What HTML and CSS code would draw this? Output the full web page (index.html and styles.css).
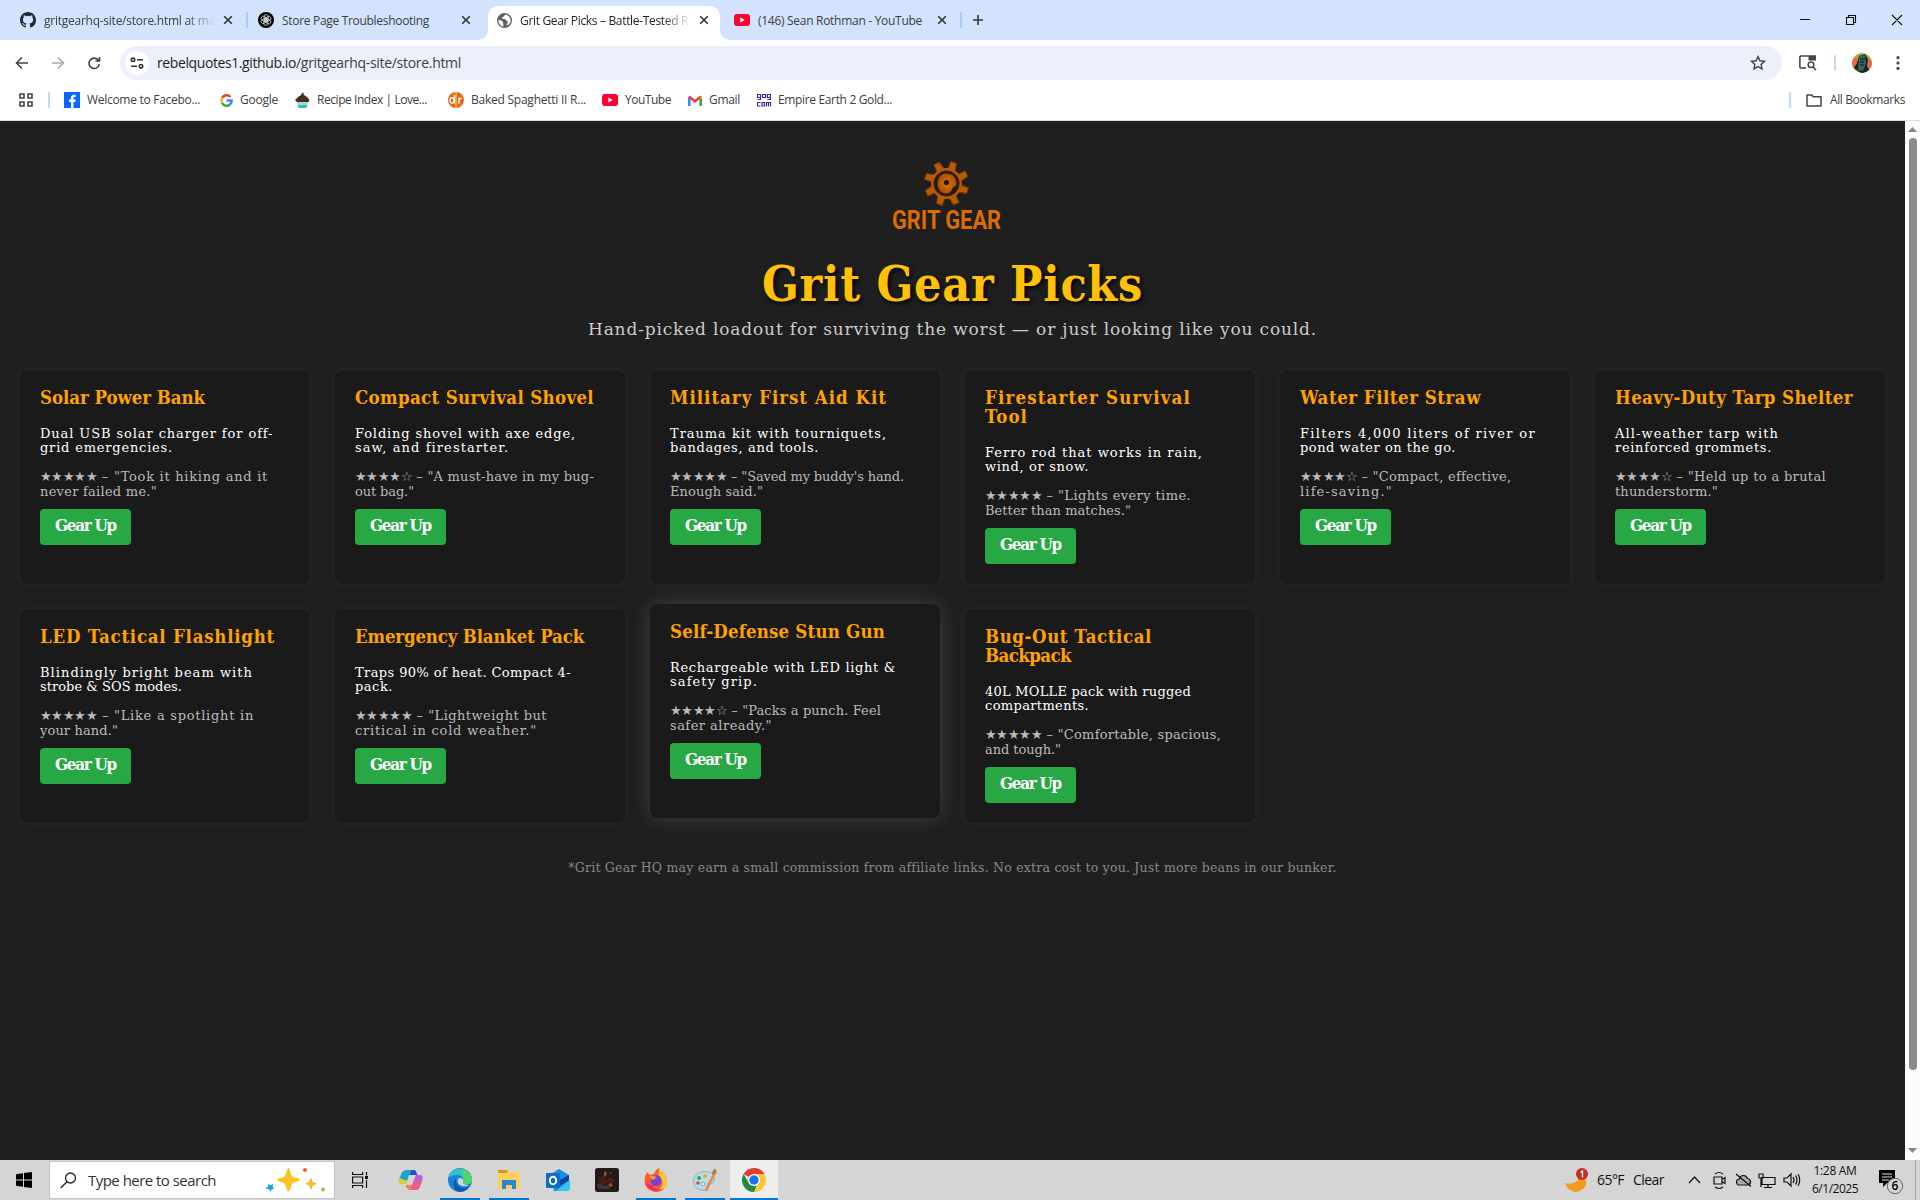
FILE: index.html
```html
<!DOCTYPE html>
<html lang="en">
<head>
<meta charset="utf-8">
<title>Grit Gear Picks</title>
<link rel="stylesheet" href="styles.css">
</head>
<body>
<svg width="0" height="0" class="defs">
  <symbol id="x" viewBox="0 0 10 10"><path d="M1.2 1.2l7.6 7.6M8.800 1.200l-7.600 7.600" stroke="#333" stroke-width="1.6"/></symbol>
  <symbol id="yt" viewBox="0 0 16 12"><rect width="16" height="12" rx="3" fill="#f03"/><path d="M6.300 3.400v5.200l4.500-2.600z" fill="#fff"/></symbol>
</svg>

<header class="tabs">
  <div class="tab t1">
    <svg width="16" height="16" viewBox="0 0 16 16"><path fill="#24292f" d="M8 0C3.580 0 0 3.580 0 8c0 3.540 2.290 6.530 5.470 7.590.4.070.55-.17.55-.38 0-.19-.01-.82-.01-1.490-2.010.37-2.530-.49-2.690-.94-.09-.23-.48-.94-.82-1.130-.28-.15-.68-.52-.01-.53.63-.01 1.080.58 1.230.82.72 1.210 1.870.87 2.330.66.07-.52.28-.87.51-1.070-1.780-.2-3.640-.89-3.640-3.950 0-.87.31-1.590.82-2.150-.08-.2-.36-1.020.08-2.120 0 0 .67-.21 2.200.82a7.600 7.600 0 0 1 4 0c1.530-1.040 2.200-.82 2.200-.82.44 1.100.16 1.920.08 2.120.51.56.82 1.270.82 2.150 0 3.070-1.870 3.750-3.650 3.950.29.25.54.73.54 1.480 0 1.070-.01 1.930-.01 2.200 0 .21.15.46.55.38A8 8 0 0 0 16 8c0-4.420-3.580-8-8-8z"/></svg>
    <span class="fade"><span class="fit" data-w="171">gritgearhq-site/store.html at ma</span></span>
    <svg class="cls" width="10" height="10"><use href="#x"/></svg>
  </div>
  <i class="sep"></i>
  <div class="tab t2">
    <svg width="16" height="16" viewBox="0 0 16 16"><circle cx="8" cy="8" r="8" fill="#000"/><g fill="none" stroke="#ddd" stroke-width=".8"><rect id="petal" x="6.200" y="2.600" width="4" height="6.500" rx="2"/><use href="#petal" transform="rotate(60 8 8)"/><use href="#petal" transform="rotate(120 8 8)"/><use href="#petal" transform="rotate(180 8 8)"/><use href="#petal" transform="rotate(240 8 8)"/><use href="#petal" transform="rotate(300 8 8)"/></g></svg>
    <span class="fit" data-w="147">Store Page Troubleshooting</span>
    <svg class="cls" width="10" height="10"><use href="#x"/></svg>
  </div>
  <div class="tab active">
    <svg width="15" height="15" viewBox="0 0 16 16"><circle cx="8" cy="8" r="8" fill="#5f6368"/><path d="M9 1.500c-1.500 1-1 2.500-2.500 2.600S5 6 6.500 6.300s3-.3 3.200 1.200 2 .8 2 2.200-1.500 2-1.700 3.500c3-.5 4.600-3 4.500-5.500S12 2 9 1.500zM1.600 7c1.500 1.500 4 .5 4.500 2.500s1 2 .5 4.800C3.500 13.800 1.300 10.500 1.600 7z" fill="#fff"/></svg>
    <span class="fade"><span class="fit" data-w="168">Grit Gear Picks – Battle-Tested R</span></span>
    <svg class="cls" width="10" height="10"><use href="#x"/></svg>
  </div>
  <div class="tab t4">
    <svg width="16" height="12"><use href="#yt"/></svg>
    <span class="fit" data-w="164">(146) Sean Rothman - YouTube</span>
    <svg class="cls" width="10" height="10"><use href="#x"/></svg>
  </div>
  <i class="sep"></i>
  <svg class="plus" width="10" height="10" viewBox="0 0 10 10"><path d="M5 0v10M0 5h10" stroke="#333" stroke-width="1.600"/></svg>
  <svg class="winctl" width="103" height="12" viewBox="0 0 103 12" fill="none" stroke="#111" stroke-width="1.100"><path d="M0 5.500h10M46.500 3.500h7v7h-7zM48.500 3.500v-2h7v7h-2M92 1l10 10M102 1l-10 10"/></svg>
</header>

<div class="toolbar">
  <svg class="nav" width="88" height="14" viewBox="0 0 88 14" fill="none" stroke-width="1.600"><path d="M13 7H2M7 1.500L1.500 7 7 12.500" stroke="#444"/><path d="M37 7h11M43 1.500L48.500 7 43 12.500" stroke="#aaa"/><path d="M83.500 4.500A5.200 5.200 0 1 0 84.300 8M84.500 1v4h-4" stroke="#444"/></svg>
  <div class="omni">
    <span class="site"><svg width="14" height="12" viewBox="0 0 14 12" fill="none" stroke="#333" stroke-width="1.600"><circle cx="3" cy="2.800" r="1.700"/><path d="M7 2.800h6M1 9.200h6"/><circle cx="11" cy="9.200" r="1.700"/></svg></span>
    <span class="url"><b class="fit" data-w="139">rebelquotes1.github.io</b><span class="fit" data-w="165">/gritgearhq-site/store.html</span></span>
    <svg class="star" width="16" height="16" viewBox="0 0 16 16"><path d="M8 1.600l1.900 4.200 4.600.5-3.400 3.100.9 4.500L8 11.600l-4 2.300.9-4.500L1.500 6.300l4.600-.5z" fill="none" stroke="#444" stroke-width="1.400"/></svg>
  </div>
  <svg class="lens" width="18" height="16" viewBox="0 0 18 16"><path d="M7 13H1.800q-.9 0-.9-1V2q0-1 .9-1H16v4" fill="none" stroke="#444" stroke-width="1.600"/><path d="M9.500 1H17v4.500H9.500z" fill="#444"/><circle cx="12" cy="9.800" r="2.800" fill="none" stroke="#444" stroke-width="1.500"/><path d="M14 12l3 3" stroke="#444" stroke-width="1.600"/></svg>
  <i class="sep"></i>
  <svg class="avatar" width="20" height="20" viewBox="0 0 20 20"><clipPath id="av"><circle cx="10" cy="10" r="10"/></clipPath><g clip-path="url(#av)"><path fill="#a8a832" d="M0 0h20v20H0z"/><path fill="#e36a50" d="M0 5h5v10H0zM15 7h5v8h-5z"/><path fill="#211f1c" d="M2 15l3-5 2-7 6-2 3 5-1 7 3 5-8 3z"/><path fill="#2e6b66" d="M7 3l6-1 1 8-3 8-5-1z"/><path d="M8 6h5M8 9h4M8 12h4" stroke="#111"/></g></svg>
  <svg class="dots" width="4" height="14" viewBox="0 0 4 14" fill="#444"><circle cx="2" cy="1.700" r="1.600"/><circle cx="2" cy="7" r="1.600"/><circle cx="2" cy="12.300" r="1.600"/></svg>
</div>

<nav class="marks">
  <svg class="apps" width="14" height="14" viewBox="0 0 14 14" fill="none" stroke="#444" stroke-width="1.600"><path d="M1 1h4v4H1zM9 1h4v4H9zM1 9h4v4H1zM9 9h4v4H9z"/></svg>
  <i class="sep"></i>
  <a class="m1"><svg width="16" height="16" viewBox="0 0 16 16"><path fill="#0866ff" d="M0 0h16v16H0z"/><path fill="#fff" d="M7 16v-6H5V7.500h2V6c0-2.300 1-3.300 3.200-3.300h1.500V5h-1c-1 0-1.200.4-1.200 1.200v1.300h2.200L11.300 10H9.500v6z"/></svg><span class="fit" data-w="113">Welcome to Facebo...</span></a>
  <a class="m2"><svg width="13" height="13" viewBox="0 0 13 13" fill="none" stroke-width="2.500"><path d="M10.500 3A5.200 5.200 0 0 0 2 4" stroke="#ea4335"/><path d="M2 4a5.300 5.300 0 0 0 0 5" stroke="#fbbc05"/><path d="M2 9a5.200 5.200 0 0 0 7.700 1.700" stroke="#34a853"/><path d="M9.700 10.700a5 5 0 0 0 2-4.200H6.500" stroke="#4285f4"/></svg><span class="fit" data-w="38">Google</span></a>
  <a class="m3"><svg width="15" height="16" viewBox="0 0 15 16"><path fill="#4a2c17" d="M8 0l1 3 3 2 2.500 3-1 2H2L0 8l3-3 3-2z"/><path fill="#35bfae" d="M2 10.500h11L11.500 16h-8z"/><path fill="#fff" d="M2 11.500h11v1H2z"/></svg><span class="fit" data-w="110">Recipe Index | Love...</span></a>
  <a class="m4"><svg width="16" height="16" viewBox="0 0 16 16"><circle cx="8" cy="8" r="8" fill="#e56a1d"/><path d="M7.200 0h1.600v16H7.200z" fill="#f5b13d"/><g fill="none" stroke="#fff" stroke-width="1.300"><ellipse cx="4" cy="8.500" rx="2" ry="2.800"/><path d="M6.500 3v8.500M11 5.500v6M11 8c.5-1.500 1.500-2 3-1.500"/></g></svg><span class="fit" data-w="115">Baked Spaghetti II R...</span></a>
  <a class="m5"><svg width="16" height="12"><use href="#yt"/></svg><span class="fit" data-w="46">YouTube</span></a>
  <a class="m6"><svg width="14" height="11" viewBox="0 0 14 11" fill="none" stroke-width="2.600"><path d="M1.300 11V2" stroke="#4285f4"/><path d="M12.700 11V2" stroke="#34a853"/><path d="M1 1.500l6 4.800 6-4.800" stroke="#ea4335"/><path d="M11.400 3l2.600-2v3z" fill="#fbbc04"/></svg><span class="fit" data-w="31">Gmail</span></a>
  <a class="m7"><svg width="14" height="13" viewBox="0 0 14 13" fill="none" stroke="#3f2a9e" stroke-width="1.200"><path d="M3.500 3.500h-3v-3h3v5h-3M5.500.5h3v3h-3zM13.400 3.500h-3v-3h3v5h-3M3.500 8.500h-3v3.500h3M5 8.500h2.500V12H5zM9.500 12.600V8.500h4v4.100M11.500 8.500v4"/></svg><span class="fit" data-w="114">Empire Earth 2 Gold...</span></a>
  <i class="sep end"></i>
  <a class="all"><svg width="16" height="13" viewBox="0 0 16 13"><path d="M1 1h4.700l1.600 1.800H15v9.200H1z" fill="none" stroke="#444" stroke-width="1.500" stroke-linejoin="round"/></svg><span class="fit" data-w="75">All Bookmarks</span></a>
</nav>

<div class="view">
<main class="page">
  <svg class="logo" width="110" height="70" viewBox="0 0 110 70" role="img">
    <defs><radialGradient id="rust"><stop offset="0" stop-color="#e07800"/><stop offset="1" stop-color="#a84d02"/></radialGradient></defs>
    <g transform="translate(54.500 23.500)">
      <g stroke="#7a3a07" stroke-width="1" fill="#b95a05">
        <path id="tooth" d="M-3.500-14l0-8.200h6l1.500 8.200z" transform="rotate(20)"/><use href="#tooth" transform="rotate(45)"/><use href="#tooth" transform="rotate(90)"/><use href="#tooth" transform="rotate(135)"/><use href="#tooth" transform="rotate(180)"/><use href="#tooth" transform="rotate(225)"/><use href="#tooth" transform="rotate(270)"/><use href="#tooth" transform="rotate(315)"/>
      </g>
      <circle r="14" fill="#231a13" stroke="#b95a05" stroke-width="2.800"/>
      <circle r="12.800" fill="none" stroke="#5a2d08" stroke-width="1"/>
      <path d="M0-10C6-10 10-6 10 0c0 4-3 2-4 5s-3 5-6 5c-6 0-9-5-9-10s3-10 9-10z" fill="url(#rust)"/>
      <circle cx="0" cy="-1" r="2.600" fill="#1f1712"/>
    </g>
    <text x="0" y="68.500" textLength="109" lengthAdjust="spacingAndGlyphs">GRIT GEAR</text>
  </svg>
  <h1><span class="fit" data-w="381">Grit Gear Picks</span></h1>
  <p class="lead"><span class="fit" data-w="729">Hand-picked loadout for surviving the worst — or just looking like you could.</span></p>

  <section class="grid">
    <article class="card"><h3><span class="fit" data-w="165">Solar Power Bank</span></h3><p><span class="fit" data-w="233">Dual USB solar charger for off-</span><br><span class="fit" data-w="133">grid emergencies.</span></p><p class="rev"><span class="fit" data-w="57">★★★★★</span><span class="fit" data-w="171"> – "Took it hiking and it</span><br><span class="fit" data-w="117">never failed me."</span></p><a class="btn"><span class="fit" data-w="61">Gear Up</span></a></article>
    <article class="card"><h3><span class="fit" data-w="239">Compact Survival Shovel</span></h3><p><span class="fit" data-w="221">Folding shovel with axe edge,</span><br><span class="fit" data-w="154">saw, and firestarter.</span></p><p class="rev"><span class="fit" data-w="57">★★★★☆</span><span class="fit" data-w="182"> – "A must-have in my bug-</span><br><span class="fit" data-w="59">out bag."</span></p><a class="btn"><span class="fit" data-w="61">Gear Up</span></a></article>
    <article class="card"><h3><span class="fit" data-w="217">Military First Aid Kit</span></h3><p><span class="fit" data-w="217">Trauma kit with tourniquets,</span><br><span class="fit" data-w="149">bandages, and tools.</span></p><p class="rev"><span class="fit" data-w="57">★★★★★</span><span class="fit" data-w="177"> – "Saved my buddy's hand.</span><br><span class="fit" data-w="93">Enough said."</span></p><a class="btn"><span class="fit" data-w="61">Gear Up</span></a></article>
    <article class="card"><h3><span class="fit" data-w="206">Firestarter Survival</span><br><span class="fit" data-w="43">Tool</span></h3><p><span class="fit" data-w="218">Ferro rod that works in rain,</span><br><span class="fit" data-w="104">wind, or snow.</span></p><p class="rev"><span class="fit" data-w="57">★★★★★</span><span class="fit" data-w="149"> – "Lights every time.</span><br><span class="fit" data-w="146">Better than matches."</span></p><a class="btn"><span class="fit" data-w="61">Gear Up</span></a></article>
    <article class="card"><h3><span class="fit" data-w="181">Water Filter Straw</span></h3><p><span class="fit" data-w="236">Filters 4,000 liters of river or</span><br><span class="fit" data-w="156">pond water on the go.</span></p><p class="rev"><span class="fit" data-w="57">★★★★☆</span><span class="fit" data-w="154"> – "Compact, effective,</span><br><span class="fit" data-w="93">life-saving."</span></p><a class="btn"><span class="fit" data-w="61">Gear Up</span></a></article>
    <article class="card"><h3><span class="fit" data-w="238">Heavy-Duty Tarp Shelter</span></h3><p><span class="fit" data-w="164">All-weather tarp with</span><br><span class="fit" data-w="157">reinforced grommets.</span></p><p class="rev"><span class="fit" data-w="57">★★★★☆</span><span class="fit" data-w="154"> – "Held up to a brutal</span><br><span class="fit" data-w="103">thunderstorm."</span></p><a class="btn"><span class="fit" data-w="61">Gear Up</span></a></article>
    <article class="card"><h3><span class="fit" data-w="235">LED Tactical Flashlight</span></h3><p><span class="fit" data-w="213">Blindingly bright beam with</span><br><span class="fit" data-w="142">strobe &amp; SOS modes.</span></p><p class="rev"><span class="fit" data-w="57">★★★★★</span><span class="fit" data-w="157"> – "Like a spotlight in</span><br><span class="fit" data-w="78">your hand."</span></p><a class="btn"><span class="fit" data-w="61">Gear Up</span></a></article>
    <article class="card"><h3><span class="fit" data-w="229">Emergency Blanket Pack</span></h3><p><span class="fit" data-w="216">Traps 90% of heat. Compact 4-</span><br><span class="fit" data-w="38">pack.</span></p><p class="rev"><span class="fit" data-w="57">★★★★★</span><span class="fit" data-w="135"> – "Lightweight but</span><br><span class="fit" data-w="182">critical in cold weather."</span></p><a class="btn"><span class="fit" data-w="61">Gear Up</span></a></article>
    <article class="card raised"><h3><span class="fit" data-w="215">Self-Defense Stun Gun</span></h3><p><span class="fit" data-w="226">Rechargeable with LED light &amp;</span><br><span class="fit" data-w="88">safety grip.</span></p><p class="rev"><span class="fit" data-w="57">★★★★☆</span><span class="fit" data-w="154"> – "Packs a punch. Feel</span><br><span class="fit" data-w="102">safer already."</span></p><a class="btn"><span class="fit" data-w="61">Gear Up</span></a></article>
    <article class="card"><h3><span class="fit" data-w="167">Bug-Out Tactical</span><br><span class="fit" data-w="86">Backpack</span></h3><p><span class="fit" data-w="206">40L MOLLE pack with rugged</span><br><span class="fit" data-w="104">compartments.</span></p><p class="rev"><span class="fit" data-w="57">★★★★★</span><span class="fit" data-w="179"> – "Comfortable, spacious,</span><br><span class="fit" data-w="76">and tough."</span></p><a class="btn"><span class="fit" data-w="61">Gear Up</span></a></article>
  </section>
  <p class="note"><span class="fit" data-w="768">*Grit Gear HQ may earn a small commission from affiliate links. No extra cost to you. Just more beans in our bunker.</span></p>
</main>
<aside class="scroll">
  <svg width="9" height="5" viewBox="0 0 9 5"><path d="M0 5l4.500-5L9 5z" fill="#858585"/></svg>
  <i class="thumb"></i>
  <svg width="9" height="5" viewBox="0 0 9 5"><path d="M0 0l4.500 5L9 0z" fill="#858585"/></svg>
</aside>
</div>

<footer class="task">
  <svg class="start" width="16" height="16" viewBox="0 0 16 16"><path d="M0 2.200l7-1v6.300H0zM8 1l8-1v7.500H8zM0 8.500h7v6.300l-7-1zM8 8.500h8V16l-8-1z"/></svg>
  <div class="search">
    <svg width="17" height="17" viewBox="0 0 17 17" fill="none" stroke="#222" stroke-width="1.300"><circle cx="10.500" cy="6" r="5"/><path d="M7 9.700L.7 16"/></svg>
    <span class="fit" data-w="128">Type here to search</span>
    <svg class="spark" width="60" height="26" viewBox="0 0 60 26"><path d="M23.500 1c1.500 0 2 7 4 8.500s7.500 1.500 7.500 3.300-6 2-7.500 3.700-2.300 8-4 8-2.500-6.500-4-8-7.500-2-7.500-3.700 6-1.800 7.500-3.300S22 1 23.500 1z" fill="#fcc321"/><path d="M46 11c.8 0 1 3 2 4s3.500.8 3.500 1.700-2.800 1-3.500 1.800-1 3.700-2 3.700-1.300-3-2-3.700-3.500-.9-3.500-1.800 2.700-.8 3.500-1.700 1-4 2-4z" fill="#f7b92a"/><path d="M3 17l2.500 1.300L8 17l-.3 3 1.800 1.500-2.700.7L5.500 25l-1.400-2.800L0 21l3-1.300z" fill="#16a5e8"/><circle cx="40" cy="3" r="2.100" fill="#f2652d"/><circle cx="58" cy="22.500" r="2" fill="#8cc83c"/></svg>
  </div>
  <svg class="tv" width="16" height="16" viewBox="0 0 16 16" fill="none" stroke="#111" stroke-width="1.200"><path d="M.6 0v2.500h10V0M.6 5h10v6H.6zM.6 16v-2.500h10V16M14.500 0v3.500M14.500 8v8"/><path d="M13 4h3v3h-3z" fill="#111" stroke="none"/></svg>
  <div class="app"><svg width="24" height="22" viewBox="0 0 24 22"><path d="M7 1h7c3 0 3 3 4 5H10L7 15H3C0 15-.3 12 .5 9L3 3.500Q4 1 7 1z" fill="#19a4cf"/><path d="M13 1h2c2 0 2.500 3 3.500 5H11q1-5 2-5z" fill="#1e50c8"/><path d="M.5 9L8.500 12 7 15H3C0 15-.3 12 .5 9z" fill="#ddd02c"/><path d="M17 6h3c4 0 4 3 3 6l-2 6q-1 3-4 3h-6q-3 0-4-5h6z" fill="#e85d8e"/><path d="M17 6h3c4 0 4 3 3 6h-8z" fill="#b460df"/><path d="M7 16l6 0-1 5q-4 0-5-5z" fill="#f57f45"/></svg></div>
  <div class="app on"><svg width="24" height="24" viewBox="0 0 24 24"><circle cx="12" cy="12" r="12" fill="#1583d7"/><path d="M1 8C4-1 18-3 23 8c2 6-2 9-6 8-3 0-3-1-2-3 1-4-2-6-6-6-4 0-7 3-8 1z" fill="#2fc2d3"/><path d="M15 1c6 2 9 6 9 11 0 4-5 5-8 4-2-1-1-2-.7-4C17 7 14 6 12 5z" fill="#54d56a"/><path d="M8 11c-1 6 4 11 13 8-3 4-7 5.500-11 4.500-6-4-6-10-2-12.500z" fill="#0d5aa7"/><path d="M10 11c-2 5 4 9 10 6.500 3-1.500-6 .5-5-3.500 1-4-3-5-5-3z" fill="#d4d4d4"/></svg></div>
  <div class="app on"><svg width="22" height="20" viewBox="0 0 22 20"><path d="M0 0h9l2 2h11v17H0z" fill="#fdd060"/><path d="M0 0h9l1 1.500L9 3H0z" fill="#d99a12"/><path d="M4 10h14v9h-4v-4H8v4H4z" fill="#2a86d2"/></svg></div>
  <div class="app"><svg width="24" height="22" viewBox="0 0 24 22"><path d="M5 5l8-5 10 6v12q0 4-4 4H8z" fill="#1c8fe0"/><path d="M23 6v5L12 18V12z" fill="#0a4593"/><path d="M10 22l14-11v8q0 3-3 3z" fill="#35c6f4"/><rect y="4" width="14" height="15" rx="1" fill="#0f6cc4"/><ellipse cx="7" cy="11.500" rx="3.200" ry="3.800" fill="none" stroke="#fff" stroke-width="1.900"/></svg></div>
  <div class="app"><svg width="24" height="24" viewBox="0 0 24 24"><rect width="24" height="24" rx="2.500" fill="#211a18"/><path d="M9 4l2-1 1 2-1 3-2 1zM14 5l3-1-1 2zM14 16l2-1 2 3-3 1zM8 12l2-1v3z" fill="#93501e"/><path d="M3 8l3 2 2-3 3 5 4-3 5 3-2 3-5-1-4 3-5-3z" fill="#4a1d12"/><path d="M2 16l4-1 3 3 5-2 1 5H3z" fill="#3a3432"/><path d="M14 15l2 2-2 2z" fill="#d52a12"/></svg></div>
  <div class="app on"><svg width="24" height="24" viewBox="0 0 24 24"><path d="M3 4l3 3q2-1 4-1 1-4 5-6 1 3 4 5c4 3 5 9 3.500 12A11.500 11.500 0 0 1 .5 13Q.5 8 3 4z" fill="#ff5a30"/><path d="M15 0q1 3 4 5c4 3 5 9 3.500 12-2 4-6 6-9 6 8-6 5-13 1-14z" fill="#ffc52f"/><path d="M1 14q2 8 11 9.500 5 0 8-3-8 3-12-3z" fill="#f02e63"/><circle cx="12" cy="12.500" r="5.500" fill="#7542d5"/><path d="M6 8q5-1 7 2-3 0-3 2-3 0-4-4z" fill="#ff9a20"/></svg></div>
  <div class="app on"><svg width="24" height="23" viewBox="0 0 24 23"><path d="M10 3c8-2 12 3 11 9-1 4-3 1-5 4-2 4-3 6-8 5S-.5 15 1 10s4-6 9-7z" fill="#b9dceb" stroke="#7ba3b5" stroke-width=".8"/><circle cx="6" cy="9" r="2" fill="#3aa84a"/><circle cx="12" cy="7" r="2" fill="#f5a623"/><circle cx="5" cy="14" r="1.800" fill="#d94b3d"/><circle cx="10" cy="15" r="1.700" fill="#e8f0f2" stroke="#6a93a8" stroke-width=".7"/><path d="M20 5l2 1-8 16-2 0 1-4z" fill="#e88b34"/><path d="M19 5q0-4 3-5 3 2 0 6z" fill="#b07a4c"/></svg></div>
  <div class="app on cur"><svg width="24" height="24" viewBox="0 0 24 24"><path d="M12 12L1.600 6A12 12 0 0 1 22.400 6z" fill="#e33b2e"/><path d="M12 12V6h10.400A12 12 0 0 1 12 24l5-9z" fill="#fcc934"/><path d="M1.600 6L6.800 15 12 18l-0 0 3-1-3 7A12 12 0 0 1 1.600 6z" fill="#1e8e3e"/><circle cx="12" cy="12" r="6" fill="#fff"/><circle cx="12" cy="12" r="4.700" fill="#1a73e8"/></svg></div>
  <svg class="moon" width="25" height="25" viewBox="0 0 25 25"><path d="M0 15q7 2 12-2 3-3 3-6l6 5q1 5-2 8-4 4-9 4Q3 23 0 15z" fill="#f39a22"/><circle cx="17" cy="6" r="6" fill="#c92c20"/><path d="M15.500 4.500L17.500 3v6.500" fill="none" stroke="#fff" stroke-width="1.300"/></svg>
  <span class="fit temp" data-w="27">65°F</span><span class="fit sky" data-w="31">Clear</span>
  <svg class="tray" width="112" height="18" viewBox="0 0 112 18" fill="none" stroke="#111" stroke-width="1.200"><path d="M1 12l5.500-6 5.500 6M26 6h8v7h-8zM34 8.500l3-2v6l-3-2M27 3q4-3 8 0M27 16q4 3 8 0"/><path d="M50 14h10q3-1 2.500-4-1-2.500-3-2.500-1-3-4-3-3.500 0-4 3.500-3 0-3 3 0 2.500 1.500 3z" fill="#aaa"/><path d="M48 3l15 12.500M74 6.500h13v7H74zM80 13.500v3M76 16.500h8M71 3h4v4h-4zM73 7v9"/><path d="M96 7h3l4-4v12l-4-4h-3zM105 6q2 3 0 6M107.500 4.500q3 4.500 0 9M110 3q3.500 6 0 12"/></svg>
  <div class="clock"><span class="fit" data-w="43">1:28 AM</span><span class="fit" data-w="46">6/1/2025</span></div>
  <svg class="bell" width="25" height="24" viewBox="0 0 25 24"><path d="M0 0h16v13H8l-4 4v-4H0z"/><path d="M3 4h10M3 7h10M3 10h7" stroke="#ddd" stroke-width="1.200"/><circle cx="16" cy="16" r="7.700" fill="#d4d4d4" stroke="#666"/><text x="16" y="20" text-anchor="middle">6</text></svg>
  <i class="desk"></i>
</footer>
<script src="fit.js"></script>
</body>
</html>
```
FILE: styles.css
```css
* { box-sizing: border-box; }
body { margin: 0; width: 1920px; height: 1200px; overflow: hidden; display: flex; flex-direction: column; background: #fff; font: 12px/16px "Open Sans", "Noto Sans", sans-serif; color: #3c4043; }
svg { display: block; flex: none; overflow: visible; }
.defs { position: absolute; }
.fit { display: inline-block; white-space: pre; }
.sep { width: 2px; height: 16px; background: #c2d8fc; border-radius: 1px; flex: none; }

.tabs { height: 40px; flex: none; background: #d3e3fd; display: flex; align-items: center; }
.tabs .sep { background: #a8c7fa; }
.tab { height: 40px; display: flex; align-items: center; gap: 8px; flex: none; }
.tab .cls { margin-left: auto; }
.tab > span { padding-top: 2px; }
.t1 { width: 246px; padding: 0 13px 0 20px; }
.t2 { width: 240px; padding: 0 17px 0 10px; }
.active { width: 232px; height: 34px; margin-top: 6px; padding: 0 11px 6px 9px; border-radius: 10px 10px 0 0; background: #fff; color: #1f1f1f; position: relative; }
.active::before, .active::after { content: ""; position: absolute; bottom: 0; width: 10px; height: 10px; }
.active::before { left: -10px; background: radial-gradient(circle at 0 0, transparent 9.500px, #fff 10px); }
.active::after { right: -10px; background: radial-gradient(circle at 100% 0, transparent 9.500px, #fff 10px); }
.fade { width: 171px; overflow: hidden; white-space: nowrap; -webkit-mask-image: linear-gradient(90deg, #000 83%, transparent); mask-image: linear-gradient(90deg, #000 83%, transparent); }
.t4 { width: 240px; padding: 0 13px 0 14px; }
.plus { margin-left: 11px; }
.winctl { margin-left: auto; margin-right: 17px; }

.toolbar { height: 40px; flex: none; padding: 6px 20px 0 15px; display: flex; align-items: center; }
.omni { width: 1662px; height: 34px; margin-left: 17px; border-radius: 17px; background: #ecf0fa; display: flex; align-items: center; padding: 0 16px 0 5px; }
.site { width: 24px; height: 24px; border-radius: 50%; background: #fff; display: flex; align-items: center; justify-content: center; }
.url { margin-left: 8px; font-size: 14px; display: flex; }
.url b { font-weight: 400; color: #1f1f1f; }
.star { margin-left: auto; }
.lens { margin-left: 17px; }
.toolbar .sep { margin: 0 16px 0 17px; }
.dots { margin-left: 24px; }

.marks { height: 41px; flex: none; display: flex; align-items: center; padding: 0 15px 0 19px; border-bottom: 1px solid #dadce0; }
.apps + .sep { margin-left: 15px; }
.marks a { display: flex; align-items: center; gap: 7px; flex: none; }
.m1 { margin-left: 14px; }
.m2 { margin-left: 20px; }
.m3 { margin-left: 17px; }
.m4 { margin-left: 21px; }
.m5 { margin-left: 16px; }
.m6 { margin-left: 17px; }
.m7 { margin-left: 17px; }
.end { margin-left: auto; }
.marks .all { margin-left: 15px; gap: 8px; }

.view { height: 1039px; flex: none; display: flex; }
.page { width: 1905px; background: #1f1f1f; color: #fff; font-family: "DejaVu Serif", serif; padding: 39px 20px 0; display: flex; flex-direction: column; align-items: center; }
.page h1, .page h3, .page p { margin: 0; }
.logo { margin-right: 11px; }
.logo text { font: 700 25px Roboto, sans-serif; fill: #dc6b02; }
.page h1 { margin-top: 26px; font-size: 48px; line-height: 56px; color: #ffc107; text-shadow: 2px 2px 4px #000; }
.page h1, .card h3, .btn { font-family: "DejaVu Serif Condensed", "DejaVu Serif", serif; font-stretch: condensed; }
.page .lead { font-size: 17px; line-height: 24px; margin-top: 5px; color: #ccc; }
.grid { width: 1865px; margin-top: 29px; display: grid; grid-template-columns: repeat(6, 290px); grid-auto-rows: 214px; gap: 25px; }
.card { background: #1a1a1a; border-radius: 8px; padding: 18px 20px 0; box-shadow: 0 0 10px rgba(255, 255, 255, .05); }
.raised { transform: translateY(-5px); box-shadow: 0 0 20px rgba(255, 255, 255, .15); }
.card .fit { vertical-align: top; }
.card h3 { font-size: 18.500px; line-height: 19px; color: #ffa200; }
.card p { font-size: 13px; line-height: 14.200px; margin-top: 20px; }
.card .rev { color: #bbb; margin-top: 15px; }
.btn { display: flex; width: 91px; height: 36px; margin-top: 10px; border-radius: 4px; background: #28a745; justify-content: center; font-size: 17px; line-height: 32px; font-weight: 700; }
.page .note { margin-top: 35px; font-size: 12.500px; line-height: 20px; color: #888; }
.scroll { width: 15px; background: #fcfcfc; display: flex; flex-direction: column; align-items: center; padding: 6px 0 7px; }
.thumb { width: 8px; height: 932px; margin-top: 6px; border-radius: 4px; background: #8b8b8b; }
.scroll svg:last-child { margin-top: auto; }

.task { height: 40px; flex: none; background: #d5d5d5; display: flex; align-items: center; color: #111; }
.start { margin-left: 16px; }
.search { width: 286px; height: 38px; margin-left: 17px; padding: 0 9px 0 10px; background: #fff; border: 1px solid #c4c4c4; display: flex; align-items: center; font-size: 15px; }
.search .fit { margin-left: 11px; color: #333; }
.spark { margin-left: auto; }
.tv { margin: 0 19px 0 17px; }
.app { width: 48px; height: 40px; margin-right: 1px; display: flex; align-items: center; justify-content: center; position: relative; flex: none; }
.app.on::after { content: ""; position: absolute; left: 4px; right: 4px; bottom: 0; height: 2px; background: #0078d7; }
.app.cur { background: #ededed; }
.app.cur::after { left: 0; right: 0; }
.moon { margin-left: auto; }
.temp, .sky { font-size: 14px; margin-left: 7px; }
.sky { margin-left: 9px; }
.tray { margin-left: 24px; }
.clock { width: 48px; margin-left: 11px; display: flex; flex-direction: column; align-items: center; line-height: 18px; }
.bell { margin-left: 20px; margin-top: 4px; }
.bell text { font: 600 12px "Open Sans", sans-serif; }
.desk { width: 1px; height: 40px; background: #aaa; margin: 0 4px 0 11px; }
```
FILE: fit.js
```js
// Tracks each line of text out (or in) to its set measure.
document.querySelectorAll('.fit').forEach(function (el) {
  var target = Number(el.dataset.w);
  var natural = el.getBoundingClientRect().width;
  el.style.letterSpacing = (target - natural) / el.textContent.length + 'px';
});
```
